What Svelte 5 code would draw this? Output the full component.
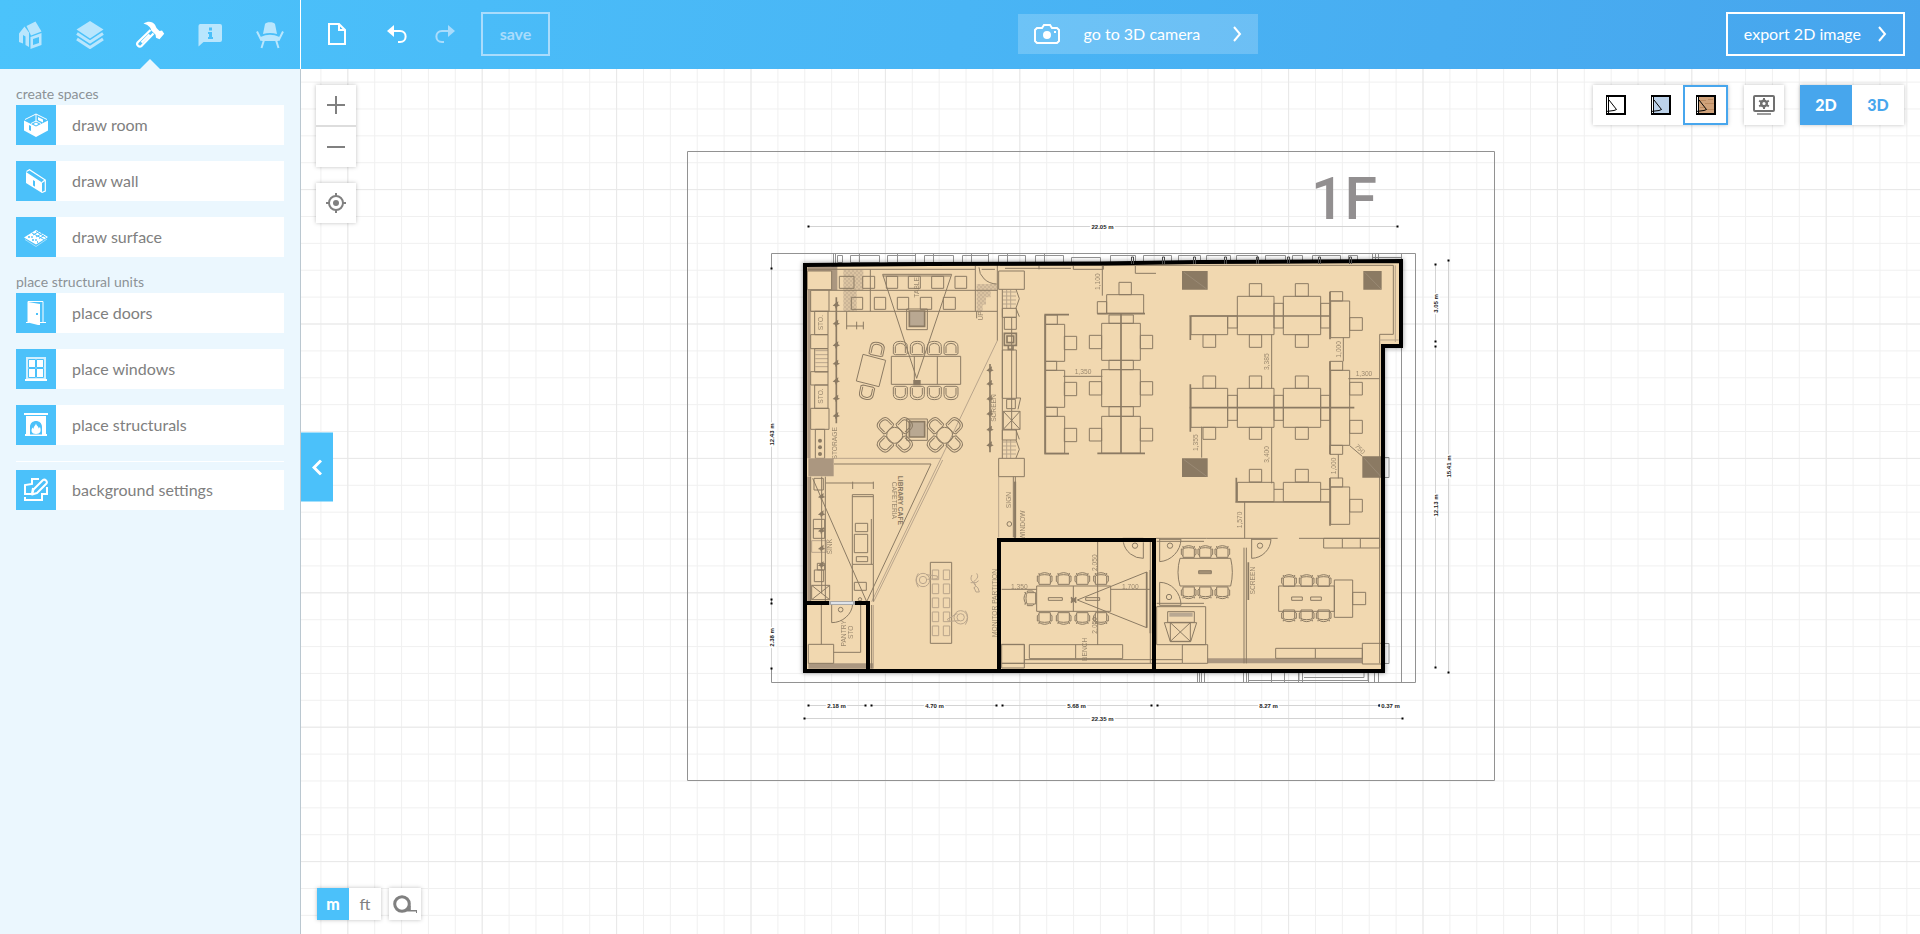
<script>
  let tab = $state('build');
  let style = $state('texture');
  let view = $state('2D');
  let unit = $state('m');

  const tabs = ['home', 'floors', 'build', 'info', 'furnish'];
  const groups = [
    {
      title: 'create spaces',
      items: [
        { icon: 'room', label: 'draw room' },
        { icon: 'wall', label: 'draw wall' },
        { icon: 'surface', label: 'draw surface' }
      ]
    },
    {
      title: 'place structural units',
      items: [
        { icon: 'door', label: 'place doors' },
        { icon: 'window', label: 'place windows' },
        { icon: 'fireplace', label: 'place structurals' }
      ]
    }
  ];

  // Plan drawings use a fine unit: three units to one canvas pixel.
  const box = ([x, y, w, h]) => `M${x},${y}h${w}v${h}h${-w}z`;
  const boxes = (list) => list.map(box).join('');
  const vlines = (xs, y1, y2) => xs.map((x) => `M${x},${y1}V${y2}`).join('');

  const lounge = boxes([
    [142, 183, 73, 56], [152, 241, 55, 63], [164, 304, 40, 70], [152, 374, 52, 42],
    [164, 416, 40, 70], [152, 485, 52, 40], [164, 525, 40, 70], [152, 595, 55, 63], [166, 658, 28, 87],
    [238, 199, 44, 36], [308, 199, 36, 36], [379, 199, 34, 36], [445, 199, 36, 36], [515, 199, 36, 36], [585, 199, 35, 36],
    [274, 262, 34, 36], [343, 262, 34, 36], [412, 262, 34, 36], [481, 262, 34, 36], [550, 262, 36, 36],
    [440, 297, 62, 62], [440, 627, 62, 64], [394, 439, 208, 84],
    [716, 183, 77, 55], [727, 295, 42, 27], [733, 322, 36, 36], [727, 420, 42, 145], [740, 568, 26, 28],
    [730, 604, 50, 54], [727, 660, 42, 30]
  ]) +
    'M142,178H646M207,241H712M152,304H712M331,178V304M646,168V304M712,165V392M463,439V523M532,439V523' +
    'M368,193H575L470,505ZM368,198H572M657,172A55,50 0 0 0 710,222M665,178H705' +
    'M309,433L377,451L357,530L289,513ZM260,304V358M260,348H310M290,335V358M310,335V358M650,304V325M727,238V745M755,322V660' +
    'M768,238l10,28l-10,28M768,295l10,25M768,564h14l-8,34M768,660l10,28M768,690l10,28l-10,26M730,604l50,54M780,604l-50,54';

  const offices = boxes([
    [137, 223, 57, 111], [137, 361, 57, 111], [137, 499, 57, 111], [137, 195, 35, 28], [137, 334, 33, 27], [137, 472, 35, 27],
    [193, 259, 37, 40], [193, 397, 37, 40], [193, 535, 37, 40],
    [305, 220, 116, 111], [305, 359, 116, 111], [305, 499, 116, 111], [327, 195, 73, 25], [327, 331, 73, 28], [327, 470, 73, 29],
    [268, 256, 37, 40], [421, 256, 37, 40], [268, 395, 37, 40], [421, 395, 37, 40], [268, 535, 37, 38], [421, 535, 37, 38],
    [320, 134, 111, 56], [292, 155, 28, 36], [357, 97, 37, 37],
    [573, 198, 110, 56], [712, 139, 110, 115], [850, 139, 112, 115], [683, 198, 29, 36], [822, 160, 28, 74], [962, 160, 28, 74],
    [748, 101, 37, 38], [886, 101, 39, 38], [609, 254, 38, 38], [748, 254, 37, 38], [886, 254, 39, 38],
    [990, 125, 38, 28], [992, 153, 57, 110], [1049, 203, 38, 38],
    [573, 415, 110, 117], [712, 415, 110, 117], [850, 415, 112, 117], [683, 436, 29, 75], [822, 436, 28, 75], [962, 436, 28, 75],
    [609, 378, 38, 37], [748, 378, 37, 37], [886, 378, 39, 37], [609, 532, 38, 36], [748, 532, 37, 36], [886, 532, 39, 36],
    [990, 334, 38, 27], [992, 361, 57, 225], [990, 586, 38, 27], [1049, 397, 38, 38], [1049, 511, 38, 39],
    [712, 697, 110, 58], [850, 697, 112, 58], [748, 658, 37, 38], [886, 658, 39, 38],
    [990, 684, 38, 27], [992, 711, 57, 112], [1049, 748, 38, 38]
  ]) +
    'M822,718h28M962,718h28M406,48V70H468M815,254V415M815,532V700M605,530V623M1030,263V334M1015,613V685' +
    'M190,379H307M1045,386H1138M307,48V137M734,756V865M1049,587L1087,619M0,46H1180M1139,253H1180V46M1139,253V865' +
    'M620,865H833M897,865H1140M220,48V58H310V48M15,55H213M117,48V58';

  const deskScreens =
    'M135,195V612M133,194H207M133,611H207M363,191V611M292,191H435M292,610H435' +
    'M568,198H992M571,198V270M990,125V268M568,473H1063M571,403V545M990,334V613M709,683V755M706,756H992M990,684V827M45,695V865';

  const cafe = boxes([
    [162, 115, 28, 35], [160, 238, 34, 28], [160, 266, 34, 29], [163, 390, 28, 35], [172, 370, 22, 20], [155, 436, 54, 43],
    [277, 164, 63, 209], [286, 250, 37, 25], [283, 283, 40, 55], [289, 350, 34, 15], [283, 427, 36, 24],
    [511, 367, 64, 243], [145, 613, 76, 57], [716, 55, 77, 55], [716, 613, 77, 57]
  ]) +
    'M222,72H513L320,485M158,115L320,485M196,110V485M185,110V460M152,110V485M197,129H340M278,125V147M340,125V147' +
    'M277,373V485M340,373V485M334,237V373M277,170H340M155,436l54,43M209,436l-54,43' +
    'M184,495V613M215,492V548A64,60 0 0 0 278,492M302,495V637H221M335,495V685M766,110V292M760,110V292';

  const meeting = boxes([
    [175, 233, 42, 8], [287, 233, 42, 8], [118, 374, 280, 42], [35, 374, 68, 70], [626, 152, 38, 9],
    [500, 260, 147, 114], [533, 275, 80, 32], [541, 308, 60, 56], [577, 374, 76, 56], [866, 198, 167, 76],
    [905, 231, 32, 10], [962, 231, 32, 10], [1033, 180, 55, 112], [1088, 217, 39, 37], [1001, 55, 168, 29],
    [857, 385, 260, 30], [1117, 370, 60, 62], [140, 198, 222, 76]
  ]) +
    'M250,198V274M262,240L470,156V323ZM35,208H140M362,208H480M323,65V375M481,65V430M257,374V416M103,419H577M35,430H577' +
    'M460,67V115A60,60 0 0 1 400,67M509,55V125A70,70 0 0 0 573,58H509M509,187V256H573A64,69 0 0 0 509,187M500,250H642M500,64H642' +
    'M785,55V115A60,60 0 0 0 843,58H785M570,115H722Q732,157 722,198H570Q558,157 570,115Z' +
    'M523,308H620L602,365H541ZM541,308l60,56M601,308l-60,56M762,83V430M769,83V430M1057,55V84M1111,55V84M976,385V415M1169,55V430' +
    'M498,55H650M398,55H460';

  // D-shaped chairs: centre x, centre y, rotation.
  const loungeChairs = [
    ...[421, 472, 523, 573].flatMap((x) => [[x, 414, 0], [x, 549, 180]]),
    [351, 417, 12], [320, 548, 192],
    ...[404, 554].flatMap((x) => [[x - 30, 645, -45], [x + 31, 645, 45], [x - 30, 704, -135], [x + 31, 704, 135]])
  ];
  const meetingChairs = [
    ...[164, 221, 277, 333].flatMap((x) => [[x, 176, 0], [x, 295, 180]]),
    [120, 235, -90],
    ...[596, 646, 697].flatMap((x) => [[x, 95, 0], [x, 218, 180]]),
    ...[897, 950, 1001].flatMap((x) => [[x, 182, 0], [x, 287, 180]])
  ];
  const spots = [
    ...[285, 340, 405, 460, 513, 565, 617].map((y) => [229, y]),
    ...[480, 521, 566, 611, 658, 705].map((y) => [690, y]),
    ...[400, 452, 502, 555, 605].map((y) => [185, y])
  ];

  // Facade bays along the top wall, in canvas pixels.
  const bays = [
    [837, 5], [850, 29], [887, 28], [924, 29], [962, 26], [998, 27], [1035, 28],
    [1110, 25], [1143, 28], [1178, 22], [1206, 24], [1236, 21], [1265, 20], [1292, 10], [1312, 28], [1348, 9]
  ];
  const facade = bays.map(([x, w]) => `M${x}.5,255.5h${w}v7h${-w}z`).join('') +
    vlines([833.5, 835.5, 859.5, 897.5, 915.5, 933.5, 971.5, 988.5, 1007.5, 1044.5, 1372.5, 1375.5, 1378.5], 254, 263);
  const mullions = [1131, 1162, 1193, 1224, 1256, 1287, 1318, 1349];

  const notes = [
    [299, 95, -90, '1,100'], [249, 371, 0, '1,350'], [806, 335, -90, '3,385'], [806, 613, -90, '3,400'], [595, 578, -90, '1,355'],
    [1022, 298, -90, '1,000'], [1007, 648, -90, '1,000'], [1092, 378, 0, '1,300'], [725, 810, -90, '1,570'], [1075, 602, 45, '750'],
    [34, 750, -90, 'SIGN'], [76, 825, -90, 'WINDOW']
  ];

  // Dimension lines in canvas pixels.
  const dims = [
    { x1: 808, y1: 226, x2: 1397, y2: 226, at: 1102, text: '22.05 m' },
    { x1: 808, y1: 705, x2: 865, y2: 705, at: 836, text: '2.18 m' },
    { x1: 871, y1: 705, x2: 996, y2: 705, at: 934, text: '4.70 m' },
    { x1: 1002, y1: 705, x2: 1151, y2: 705, at: 1076, text: '5.68 m' },
    { x1: 1157, y1: 705, x2: 1379, y2: 705, at: 1268, text: '8.27 m' },
    { x1: 1379, y1: 705, x2: 1398, y2: 705, at: 1390, text: '0.37 m' },
    { x1: 804, y1: 718, x2: 1402, y2: 718, at: 1102, text: '22.35 m' },
    { x1: 771, y1: 268, x2: 771, y2: 599, at: 434, text: '12.43 m' },
    { x1: 771, y1: 603, x2: 771, y2: 668, at: 637, text: '2.38 m' },
    { x1: 1435, y1: 264, x2: 1435, y2: 341, at: 303, text: '3.05 m' },
    { x1: 1435, y1: 346, x2: 1435, y2: 667, at: 505, text: '12.13 m' },
    { x1: 1448, y1: 260, x2: 1448, y2: 672, at: 466, text: '15.41 m' }
  ];
</script>

{#snippet tabIcon(name)}
  <svg viewBox="0 0 30 30" width="30" height="30" aria-hidden="true">
    {#if name === 'home'}
      <path fill="currentColor" d="M4 14.500 9.500 7.500l4.500 6v14.500L10.500 26v-8.500L8 16v8.500L4 23z" />
      <path fill="currentColor" d="M11.500 7 20.500 2.500 26.500 12.500 16 16.500z" />
      <path fill="currentColor" fill-rule="evenodd" d="M15.500 18 26.500 14v12L15.500 30zM18 20v6l6-2v-6z" />
    {:else if name === 'floors'}
      <path fill="currentColor" d="M15 2 28.500 10.500 15 19.500 1.500 10.500z" />
      <path fill="none" stroke="currentColor" stroke-width="3" d="M2 14.500 15 23 28 14.500M2 20 15 28.500 28 20" />
    {:else if name === 'build'}
      <path fill="currentColor" d="M8.500 4.500c5-2.800 9-1.800 11.500 1.200l1.500 3.300 3 3 2.500-.5 2.200 3.200-4.700 5.500-3.500-1.500-.4-3-4.300-4.200C15.500 7.500 12 5.500 8.500 4.500z" />
      <path fill="none" stroke="currentColor" stroke-width="2.200" stroke-linejoin="round" d="M15.500 11 2.800 23.200c-2 2.500 1.200 5.800 3.900 3.600L18.500 14.500M14.500 15.500l-8 8" />
    {:else if name === 'info'}
      <path fill="currentColor" fill-rule="evenodd" d="M5 5h20a2 2 0 0 1 2 2v14a2 2 0 0 1-2 2H8.500L3.500 27.500V7A2 2 0 0 1 5 5zM14 8.500v3h3v-3zM13 13v2h1v3h-1v2h5v-2h-1v-5z" />
    {:else}
      <path fill="currentColor" d="M10 5c1-2.300 9-2.300 10 0l2 10q-7-1.800-14 0z" />
      <path fill="none" stroke="currentColor" stroke-width="2" d="M2 12.500 6.500 21.500M28 12.500 23.500 21.500M9 21 6.500 29M21 21l2.500 8" />
      <path fill="currentColor" d="M5.500 18q9.500-4.500 19 0l-1 4H6.500z" />
    {/if}
  </svg>
{/snippet}

{#snippet toolIcon(name)}
  <svg viewBox="0 0 24 24" width="24" height="24" fill="#fff" aria-hidden="true">
    {#if name === 'room'}
      <path d="M0 7.500 12 13.500V24L0 17.500zM5 12v5l2 1v-5zM24 7.500 12 13.500V24l12-6.500z" fill-rule="evenodd" />
      <path d="M1 6.500 12 1 23 6.500M12 1v8M7 10.500l5-2.500 5 2.500" fill="none" stroke="#fff" stroke-width="1" />
      <path d="M14 4l5 2.500v3L14 7zM9.500 11l2.500-1.500 2.500 1.500-2.500 1.500z" />
    {:else if name === 'wall'}
      <path fill-rule="evenodd" d="M2 3 18 13.500V24L2 14zM9 11v5.500l2 1.200v-5.500z" />
      <path fill="none" stroke="#fff" stroke-width="1.200" d="M2.500 2.500 5.500.8 21.300 11v11L18 23.500M18 13.500 21 11" />
    {:else if name === 'surface'}
      <path d="M12 5 24 12 12 19.500 0 12.500z" />
      <path stroke="#4bc1fa" stroke-width="1" fill="none" d="M8 8 20 14.500M12 6.500 22 12.500M9 10l6-3.500M12 12l6-3.500M15 13.500l5-3" />
      <path stroke="#4bc1fa" stroke-width="1.300" d="M4 12h2M8 11v2M8 15h2M12 14v2M13 17h1" />
      <path d="M1 14.500 12 21.500 23 14" fill="none" stroke="#fff" stroke-opacity=".5" />
    {:else if name === 'door'}
      <path fill="none" stroke="#fff" d="M4 21V.5h15V21M2 21.500h3M16 21.500h6" />
      <path fill-rule="evenodd" d="M4 1l12 2v21.500L4 21.500zM12 12v2h2v-2z" />
    {:else if name === 'window'}
      <path fill="#d2effe" d="M2 0h20v22H2z" />
      <path stroke="#4bc1fa" fill="#fff" d="M4.500 2.500h7v8h-7zM12.500 2.500h7v8h-7zM4.500 11.500h7v9h-7zM12.500 11.500h7v9h-7z" />
      <path d="M1 22h22v2H1z" />
    {:else if name === 'fireplace'}
      <path d="M0 0h24v2H0zM2 3h20v2H2z" />
      <path fill-rule="evenodd" d="M2 4h20v17h1v2H1v-2h1zM6 21.500h12V14c0-8-12-8-12 0z" />
      <path d="M12 10c0 3 3 3 2.500 5.500L16 14c1.500 4 .500 7-4 7s-5.500-3.500-3.500-6.500l1 1.500C9.500 13 12 12.500 12 10z" />
    {:else}
      <path fill="none" stroke="#fff" stroke-width="2" d="M15 1H8v5L1 7v9h7l1-6M23 9v7h-5v6H0M1 19v3" />
      <path fill="none" stroke="#fff" stroke-width="2" stroke-linejoin="round" d="M9.500 11.500 19 2q1.500-1 3 .5t.5 3L13 15l-5 1.500z" />
    {/if}
  </svg>
{/snippet}

{#snippet styleIcon(fill)}
  <svg viewBox="0 0 20 20" width="20" height="20" aria-hidden="true">
    <rect x="1" y="1" width="18" height="18" {fill} stroke="#000" stroke-width="2" />
    {#if fill === '#d0a27a'}
      <path stroke="#bb8a61" fill="none" d="M3 5.500h7M9 8.500h9M4 12.500h5M11 14.500h7M12 4.500h5" />
    {/if}
    <path fill="#fff" d="M0 2h3v16H0z" />
    <path stroke="#000" fill="none" d="M.5 0V20M2.500 2V18M3 5 10.500 14.500 8 15.500 0 16.500" />
  </svg>
{/snippet}

{#snippet chair(x, y, r)}
  <path transform="translate({x} {y}) rotate({r})" d="M-21,17V-4Q-21,-20 0,-20Q21,-20 21,-4V17L15,20H-15ZM-15,15V-4Q-13,-14 0,-14Q13,-14 15,-4V15" />
{/snippet}

{#snippet armchair(x, y, r)}
  <path transform="translate({x} {y}) rotate({r})" d="M-17,17V-8Q-14,-12 0,-12T17,-8V17ZM-17,-12Q0,-24 17,-12M-18,-8H-22V8L-17,12M18,-8H22V8L17,12M-17,-12V-17M17,-12V-17" />
{/snippet}

<div class="app">
  <header>
    <nav class="tabs" aria-label="Editor sections">
      {#each tabs as t}
        <button class="tab" class:active={tab === t} aria-label={t} onclick={() => (tab = t)}>{@render tabIcon(t)}</button>
      {/each}
    </nav>
    <div class="bar">
      <div class="bar-group">
        <button class="plain" aria-label="new document">
          <svg viewBox="0 0 20 24" width="20" height="24" fill="none" stroke="currentColor" stroke-width="2" aria-hidden="true">
            <path d="M2 2h10l6 6v14H2zM12 2v6h6" />
          </svg>
        </button>
        <button class="plain" aria-label="undo">
          <svg viewBox="0 0 20 18" width="20" height="18" aria-hidden="true">
            <path fill="currentColor" d="M0 6 7 0v12z" />
            <path fill="none" stroke="currentColor" stroke-width="2" d="M6 6h7c7.500 0 7.500 11 0 11h-2" />
          </svg>
        </button>
        <button class="plain" aria-label="redo" disabled>
          <svg viewBox="0 0 20 18" width="20" height="18" aria-hidden="true">
            <path fill="currentColor" d="M20 6 13 0v12z" />
            <path fill="none" stroke="currentColor" stroke-width="2" d="M14 6H7c-7.500 0-7.500 11 0 11h2" />
          </svg>
        </button>
        <button class="outlined save" disabled>save</button>
      </div>
      <button class="camera">
        <svg viewBox="0 0 26 20" width="26" height="20" fill="none" stroke="#fff" stroke-width="2" aria-hidden="true">
          <path d="M3 4h5l2-3h6l2 3h5l2 2v11l-2 2H3l-2-2V6z" />
          <circle cx="13" cy="11" r="3" fill="#fff" />
          <path d="M20 8h2" />
        </svg>
        <span>go to 3D camera</span>
        <svg viewBox="0 0 10 16" width="10" height="16" fill="none" stroke="#fff" stroke-width="2" aria-hidden="true"><path d="M2 1l6 7-6 7" /></svg>
      </button>
      <button class="outlined export">
        <span>export 2D image</span>
        <svg viewBox="0 0 10 16" width="10" height="16" fill="none" stroke="#fff" stroke-width="2" aria-hidden="true"><path d="M2 1l6 7-6 7" /></svg>
      </button>
    </div>
  </header>

  <div class="body">
    <aside>
      {#each groups as g}
        <h2>{g.title}</h2>
        <ul>
          {#each g.items as item}
            <li><button class="tool"><span class="tile">{@render toolIcon(item.icon)}</span><span>{item.label}</span></button></li>
          {/each}
        </ul>
      {/each}
      <hr />
      <button class="tool"><span class="tile">{@render toolIcon('background')}</span><span>background settings</span></button>
    </aside>

    <main>
      <svg class="plan" role="img" aria-label="Floor plan 1F">
        <defs>
          <pattern id="fine" x="347.300" y="54.700" width="26.880" height="26.880" patternUnits="userSpaceOnUse">
            <path d="M0 0H26.880M0 0V26.880" stroke="#f0f0f0" stroke-width="2" />
          </pattern>
          <pattern id="coarse" x="347.300" y="54.700" width="134.400" height="134.400" patternUnits="userSpaceOnUse">
            <path d="M0 0H134.400M0 0V134.400" stroke="#e8e8e8" stroke-width="2" />
          </pattern>
          <pattern id="hatch" width="4" height="4" patternUnits="userSpaceOnUse">
            <path d="M0 0h2v2H0zM2 2h2v2H2z" fill="#b5a088" />
          </pattern>
          <filter id="soft" x="-5%" y="-5%" width="110%" height="110%"><feGaussianBlur stdDeviation="2" /></filter>
        </defs>
        <g transform="translate(-301 -69)">
          <rect x="301" y="69" width="100%" height="100%" fill="url(#fine)" />
          <rect x="301" y="69" width="100%" height="100%" fill="url(#coarse)" />

          <g fill="none" stroke="#929292">
            <path d="M687.500 151.500H1494.500V780.500H687.500Z" />
            <path d="M771.500 253.500H1415.500V682.500H771.500Z" />
            <path d="M1401.500 253V682" />
            <path d={facade} />
            <path d="M1071.500 257.500h29v8h-29zM1373 257.500h28M1385 457.500h4v20h-4M1385 643.500h4v20h-4" />
            <path d={vlines([1197.5, 1199.5, 1201.5, 1204.5, 1243.5, 1246.5, 1248.5, 1271.5, 1284.5, 1298.5, 1302.5, 1368.5, 1374.5, 1378.5], 672, 682)} />
            <path d="M1299 665.500h69v15h-69zM1304 668.500h60v9h-60M1248 680.500h50" />
          </g>
          <text class="floor" x="1311" y="219">1F</text>

          <path d="M805 265 930 264 1100 263.500 1200 262 1401 261V346H1383V671H805Z" filter="url(#soft)" fill="none" stroke="#000" stroke-opacity=".35" stroke-width="5" />
          <path d="M805 265 930 264 1100 263.500 1200 262 1401 261V346H1383V671H805Z" fill="#f1d8b0" />

          <g class="ink">
            <g transform="translate(760 210) scale(.33333)">
              <path class="fill mid" d="M142 170h72v13h-72zM142 240h10v505h-10zM214 168h18v72h-18z" />
              <path fill="url(#hatch)" stroke="none" d="M250 180h60v61h-20v63h-40zM650 222h60v20h-18v20h-14v22h-10v20h-18z" />
              <path class="faint" d="M166 422h38M166 434h38M166 446h38M166 458h38M166 470h38M728 246h40M728 258h40M728 270h40M728 282h40M728 696h40M728 708h40M728 720h40M728 732h40M740 240v54M752 240v54M740 690v54M752 690v54" />
              <path class="faint" d="M712 392 543 745" />
              <path d={lounge} />
              <path class="fill pale" d="M448 303h46v46h-46zM448 635h46v46h-46z" />
              <path class="heavy" d="M733 370h36v36h-36zM741 378h20v20h-20zM745 406v12h14v-12M229 262V640M690 462V727M448 303h46v46h-46zM448 635h46v46h-46z" />
              {#each loungeChairs as [x, y, r]}{@render chair(x, y, r)}{/each}
              <circle cx="404" cy="676" r="24" /><circle cx="554" cy="676" r="24" />
              {#each [692, 712, 732] as cy}<circle class="fill" cx="180" {cy} r="6" />{/each}
              {#each spots.slice(0, 13) as [x, y]}<path class="fill" d="M{x - 11} {y + 2}l8-7 9-6-1 9 6 3-9 4-4 6-2-7z" />{/each}
              <path class="fill" d="M460 510h22v16h-22z" />
              <text class="note" transform="translate(476 232) rotate(-90)">TABLE</text>
              <text class="note" transform="translate(188 338) rotate(-90)">STO.</text>
              <text class="note" transform="translate(188 558) rotate(-90)">STO.</text>
              <text class="note" transform="translate(670 318) rotate(-90)">UP</text>
              <text class="note" transform="translate(708 594) rotate(-90)">SCREEN</text>
              <text class="note" transform="translate(232 700) rotate(-90)">STORAGE</text>
            </g>

            <g transform="translate(1000 250) scale(.33333)">
              <path d={offices} />
              <path class="heavy" d={deskScreens} />
              <path class="fill" d="M546 63h77v56h-77zM1090 63h55v56h-55zM546 625h77v56h-77zM1087 619h58v64h-58z" />
              <path class="trace" d="M552 67 620 117M1094 67 1143 117M552 629 620 679M1093 625 1143 680" />
              <path class="faint" d="M1186 46V276M1139 270H1196" />
              {#each notes as [x, y, r, t]}<text class="note" transform="translate({x} {y}) rotate({r})">{t}</text>{/each}
            </g>

            <g transform="translate(760 440) scale(.33333)">
              <path class="fill mid" d="M142 110h10v375h-10zM145 670h195v16h-195zM145 55h76v54h-76z" />
              <path class="faint" d="M222 55H543L335 485M548 60 341 485M155 302h45v35h-45zM716 110V292M340 495V685" />
              <path d={cafe} />
              <path class="heavy" d="M766 125V292" />
              {#each spots.slice(13) as [x, y]}<path class="fill" d="M{x - 11} {y - 228}l8-7 9-6-1 9 6 3-9 4-4 6-2-7z" />{/each}
              {#each [390, 432, 474, 516, 558] as y}<path class="faint" d="M517 {y}h19v29h-19zM550 {y}h19v29h-19z" />{/each}
              <g class="faint">
                <circle cx="489" cy="420" r="20" /><circle cx="489" cy="420" r="11" /><path d="M475 400q-14 20 0 42M498 404l34 4v8l-30 2" />
                <circle cx="602" cy="532" r="20" /><circle cx="602" cy="532" r="11" /><path d="M616 512q14 20 0 42M592 520l-30 18 4 6 32-2" />
                <path d="M650 400q8 12-4 20t8 24l4 12h-10l-6-14M636 405q-8 14 4 22t2 18M632 428h16l8-6" />
              </g>
              <circle cx="242" cy="509" r="7" /><circle cx="300" cy="478" r="5" /><circle cx="748" cy="252" r="7" />
              <text class="label" transform="translate(415 181) rotate(90)">LIBRARY CAFE</text>
              <text class="note" transform="translate(396 181) rotate(90)">CAFETERIA</text>
              <text class="note" transform="translate(279 577) rotate(-90)">STO</text>
              <text class="note" transform="translate(258 580) rotate(-90)">PANTRY</text>
              <text class="note" transform="translate(216 320) rotate(-90)">SINK</text>
              <text class="note" transform="translate(711 489) rotate(-90)">MONITOR PARTITION</text>
            </g>

            <g transform="translate(990 520) scale(.33333)">
              <path class="fill mid" d="M653 415h464v15h-464z" />
              <path class="fill pale" d="M538 278h70v12h-70z" />
              <path d={meeting} />
              <path class="heavy" d="M775 127V240M470 156V323M481 150V340M626 156h38" />
              <path class="heavy" d="M243 232l16 16M259 232l-16 16M243 240h16" />
              {#each meetingChairs as [x, y, r]}{@render armchair(x, y, r)}{/each}
              <circle cx="435" cy="77" r="8" /><circle cx="540" cy="77" r="8" /><circle cx="537" cy="231" r="8" /><circle cx="810" cy="77" r="8" />
              <text class="note" transform="translate(320 128) rotate(-90)">2,050</text>
              <text class="note" transform="translate(320 316) rotate(-90)">2,050</text>
              <text class="note" transform="translate(88 206)">1,350</text>
              <text class="note" transform="translate(421 206)">1,700</text>
              <text class="note" transform="translate(292 388) rotate(-90)">BENCH</text>
              <text class="note" transform="translate(794 182) rotate(-90)">SCREEN</text>
            </g>
          </g>

          <g fill="none" stroke="#000" stroke-width="4">
            <path d="M805 265 930 264 1100 263.500 1200 262 1401 261V346H1383V671H805Z" />
            <path d="M805 603H868V671M999 671V540H1154V671" />
          </g>
          <g fill="none" stroke="#4a4a4a">
            {#each mullions as x}<path d="M{x}.500 264v-7h2v7" />{/each}
          </g>
          <path d="M829 603H855" stroke="#a9a9a9" stroke-width="4" />
          <path d="M831 603H853" stroke="#dfe3e8" stroke-width="2" />

          <g transform="translate(.5 .5)">
            {#each dims as d}
              {@const vertical = d.x1 === d.x2}
              <path d="M{d.x1} {d.y1}L{d.x2} {d.y2}" stroke="#d3d3d3" />
              <rect x={d.x1 - 1} y={d.y1 - 1} width="2" height="2" />
              <rect x={d.x2 - 1} y={d.y2 - 1} width="2" height="2" />
              <text class="dim-text" transform={vertical ? `translate(${d.x1 + 2} ${d.at}) rotate(-90)` : `translate(${d.at} ${d.y1 + 2})`}>{d.text}</text>
            {/each}
          </g>
        </g>
      </svg>

      <div class="left-tools">
        <div class="card stack">
          <button aria-label="zoom in"><svg viewBox="0 0 18 18" width="18" height="18" stroke="#808080" stroke-width="2" aria-hidden="true"><path d="M0 9h18M9 0v18" /></svg></button>
          <button aria-label="zoom out"><svg viewBox="0 0 18 18" width="18" height="18" stroke="#808080" stroke-width="2" aria-hidden="true"><path d="M0 9h18" /></svg></button>
        </div>
        <div class="card stack">
          <button aria-label="center plan">
            <svg viewBox="0 0 20 20" width="20" height="20" fill="none" stroke="#808080" stroke-width="2" aria-hidden="true">
              <circle cx="10" cy="10" r="7" /><circle cx="10" cy="10" r="3" fill="#808080" stroke="none" />
              <path d="M10 0v4M10 16v4M0 10h4M16 10h4" />
            </svg>
          </button>
        </div>
      </div>

      <div class="right-tools">
        <div class="card styles">
          <button class:on={style === 'plain'} aria-label="plain" onclick={() => (style = 'plain')}>{@render styleIcon('#fff')}</button>
          <button class:on={style === 'color'} aria-label="color" onclick={() => (style = 'color')}>{@render styleIcon('#bcd2ea')}</button>
          <button class:on={style === 'texture'} aria-label="texture" onclick={() => (style = 'texture')}>{@render styleIcon('#d0a27a')}</button>
        </div>
        <div class="card settings">
          <button aria-label="display settings">
            <svg viewBox="0 0 22 20" width="22" height="20" fill="none" stroke="#707070" stroke-width="2" aria-hidden="true">
              <rect x="1" y="1" width="20" height="15" rx="1" />
              <path stroke="#9b9b9b" d="M4 19h14" />
              <circle cx="11" cy="8.500" r="2.800" stroke-width="2.400" />
              <path d="M11 3v2.500M11 11.500V14M6.200 5.700l2 1.300M13.800 10l2 1.300M6.200 11.300l2-1.300M13.800 7l2-1.300" />
            </svg>
          </button>
        </div>
        <div class="card views">
          {#each ['2D', '3D'] as v}<button class:on={view === v} onclick={() => (view = v)}>{v}</button>{/each}
        </div>
      </div>

      <div class="bottom-tools">
        <div class="card units">
          {#each ['m', 'ft'] as u}<button class:on={unit === u} onclick={() => (unit = u)}>{u}</button>{/each}
        </div>
        <div class="card units">
          <button aria-label="measure">
            <svg viewBox="0 0 24 20" width="24" height="20" fill="none" stroke="#808080" aria-hidden="true">
              <circle cx="9" cy="10" r="7.300" stroke-width="3" />
              <path fill="#808080" stroke="none" d="M9 16.500h4.500l2.500-5h1.800v4.500h6.200v3h-1v-1.500H9z" />
            </svg>
          </button>
        </div>
      </div>
    </main>
  </div>

  <button class="collapse" aria-label="collapse panel">
    <svg viewBox="0 0 10 16" width="10" height="16" fill="none" stroke="#fff" stroke-width="3" aria-hidden="true"><path d="M9 1 2 8l7 7" /></svg>
  </button>
</div>

<style>
  :global(body) { margin: 0; }
  .app {
    --sky: #4bc1fa;
    --blue: #47a6ed;
    position: relative;
    display: flex;
    flex-direction: column;
    min-height: 100vh;
    color: #808080;
    font: 16px/20px Lato, sans-serif;
  }
  .app :where(button) {
    margin: 0;
    padding: 0;
    border: 0;
    background: none;
    color: inherit;
    font: inherit;
    display: flex;
    align-items: center;
    justify-content: center;
    cursor: pointer;
  }
  svg { display: block; }

  header {
    display: flex;
    height: 69px;
    background: linear-gradient(100deg, #4bc3fb, #49b5f5 50%, #47a5ed);
    color: #fff;
  }
  .tabs { display: flex; width: 300px; border-right: 1px solid #fff; }
  .tab { flex: 1; position: relative; }
  .app .tab { color: #b9e6fd; padding-bottom: 2px; }
  .app .tab.active { color: #fff; }
  .tab.active::after {
    content: '';
    position: absolute;
    bottom: 0;
    left: 50%;
    margin-left: -10px;
    border: 10px solid transparent;
    border-top: 0;
    border-bottom-color: #ebf7fe;
  }
  .bar {
    flex: 1;
    display: flex;
    align-items: center;
    justify-content: space-between;
    padding: 0 15px 2px 26px;
  }
  .bar-group { display: flex; align-items: center; }
  .plain { height: 40px; }
  .plain + .plain { margin-left: 40px; }
  .plain + .plain + .plain { margin-left: 28px; }
  .plain:disabled { color: #a9dcfc; }
  .outlined { height: 44px; }
  .app .outlined { border: 2px solid #fff; }
  .app .save { width: 69px; margin-left: 26px; color: #a9dcfc; border-color: #a9dcfc; font-weight: 700; }
  .export { gap: 16px; }
  .app .export { padding: 0 16px; }
  .camera { height: 40px; gap: 24px; }
  .app .camera { padding: 0 16px; background: rgba(255, 255, 255, 0.2); }
  .camera svg:last-child { margin-left: 8px; }

  .body { flex: 1; display: flex; }
  aside {
    box-sizing: border-box;
    width: 301px;
    padding: 0 16px;
    background: #ebf7fe;
    border-right: 1px solid #bac7d0;
  }
  h2 { margin: 14px 0 0; font: 14px/22px Lato, sans-serif; color: #8c9296; }
  ul { margin: 0; padding: 0; list-style: none; display: grid; gap: 16px; }
  .app .tool { width: 100%; height: 40px; justify-content: flex-start; gap: 16px; background: #fff; }
  .tile { display: grid; place-items: center; width: 40px; height: 40px; background: var(--sky); }
  hr { margin: 16px 0 8px; border: 0; border-top: 1px solid #fff; }

  main { flex: 1; position: relative; overflow: hidden; background: #fff; }
  .plan { position: absolute; inset: 0; width: 100%; height: 100%; }
  .floor { font: 500 59px Roboto, sans-serif; fill: #928f90; }
  .ink { fill: none; stroke: #8b7a63; stroke-width: 3; }
  .ink .heavy { stroke-width: 5; }
  .ink .faint { stroke: #b9a58c; }
  .ink .trace { stroke: #9a8a74; }
  .ink .fill { fill: #8b7a63; stroke: none; }
  .ink .mid { fill: #ab9780; }
  .ink .pale { fill: #b9a892; }
  .ink text { fill: #8b7a63; stroke: none; text-anchor: middle; }
  .ink .note { font: 20px 'Liberation Sans', sans-serif; opacity: 0.85; }
  .ink .label { font: 700 20px 'Liberation Sans', sans-serif; }
  .dim-text { font: 700 6px 'Liberation Sans', sans-serif; text-anchor: middle; fill: #222; stroke: #fff; stroke-width: 3px; paint-order: stroke; }

  .left-tools, .right-tools, .bottom-tools { position: absolute; display: flex; gap: 16px; }
  .left-tools { top: 16px; left: 15px; flex-direction: column; }
  .right-tools { top: 16px; right: 16px; }
  .bottom-tools { bottom: 14px; left: 16px; gap: 8px; }
  .card { display: flex; background: #fff; box-shadow: 0 0 4px rgba(0, 0, 0, 0.25); }
  .stack { flex-direction: column; }
  .stack button, .settings button { width: 40px; height: 40px; }
  .stack button + button { height: 42px; border-top: 2px solid #ddd; }
  .styles button { box-sizing: border-box; width: 45px; height: 40px; }
  .styles .on { border: 2px solid var(--blue); }
  .views button { width: 52px; height: 40px; color: var(--blue); font-weight: 900; }
  .views .on { background: var(--blue); color: #fff; }
  .units button { width: 32px; height: 32px; }
  .units .on { background: var(--sky); color: #fff; font-weight: 900; }
  .collapse {
    position: absolute;
    top: 50%;
    left: 301px;
    width: 32px;
    height: 69px;
    transform: translateY(-50%);
  }
  .app .collapse { background: var(--sky); }
</style>
